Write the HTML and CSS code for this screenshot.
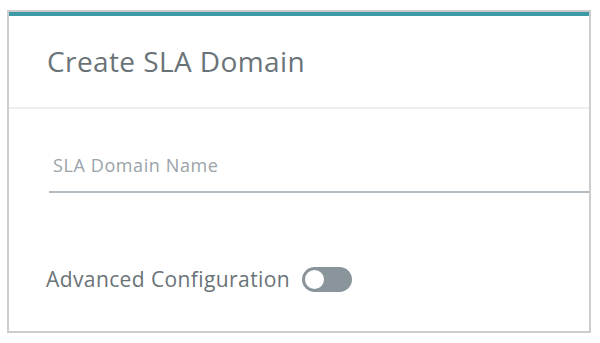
FILE: index.html
```html
<!DOCTYPE html>
<html lang="en">
<head>
    <meta charset="UTF-8">
    <meta name="viewport" content="width=device-width, initial-scale=1.0">
    <title>Create SLA Domain</title>
    <link rel="stylesheet" href="styles.css">
</head>
<body>
    <div class="dialog">
        <header class="dialog-header">
            <h1>Create SLA Domain</h1>
        </header>
        <div class="dialog-body">
            <div class="field">
                <input type="text" id="slaName" name="slaName" placeholder="SLA Domain Name">
            </div>
            <label class="toggle-row">
                <span>Advanced Configuration</span>
                <span class="toggle"><span class="knob"></span></span>
            </label>
        </div>
    </div>
</body>
</html>
```

FILE: styles.css
```css
body {
    font-family: "Open Sans", sans-serif;
    background-color: #ffffff;
    margin: 0;
    padding: 10px 9px 10px 7px;
}

.dialog {
    border: 2px solid #cdcdcd;
    border-top: 2px solid #c9c9c9;
    background-color: #ffffff;
    box-sizing: border-box;
    height: 323px;
}

.dialog-header {
    border-top: 4px solid #3b9aa4;
    border-bottom: 2px solid #efefef;
    height: 91px;
    padding-left: 38px;
    display: flex;
    align-items: center;
}

h1 {
    margin: 0;
    font-size: 28px;
    font-weight: 400;
    letter-spacing: 0.4px;
    color: #6a7378;
    padding-bottom: 2px;
}

.dialog-body {
    padding: 44px 0 0 40px;
}

.field {
    border-bottom: 2px solid #b3bbc0;
}

.field input {
    width: 100%;
    box-sizing: border-box;
    border: none;
    outline: none;
    padding: 0 0 14px 4px;
    font-family: inherit;
    font-size: 18px;
    letter-spacing: 0.6px;
    color: #6a7378;
    background: transparent;
}

.field input::placeholder {
    color: #9aa3a9;
}

.toggle-row {
    display: flex;
    align-items: center;
    gap: 12px;
    margin-top: 72px;
    margin-left: -3px;
    font-size: 21px;
    letter-spacing: 0.4px;
    color: #6a7378;
}

.toggle {
    width: 50px;
    height: 25px;
    border-radius: 13px;
    background-color: #8a959b;
    display: flex;
    align-items: center;
    padding: 0 1px;
    box-sizing: border-box;
}

.knob {
    width: 23px;
    height: 23px;
    border-radius: 50%;
    background-color: #ffffff;
    border: 2px solid #8a959b;
    box-sizing: border-box;
}
```
